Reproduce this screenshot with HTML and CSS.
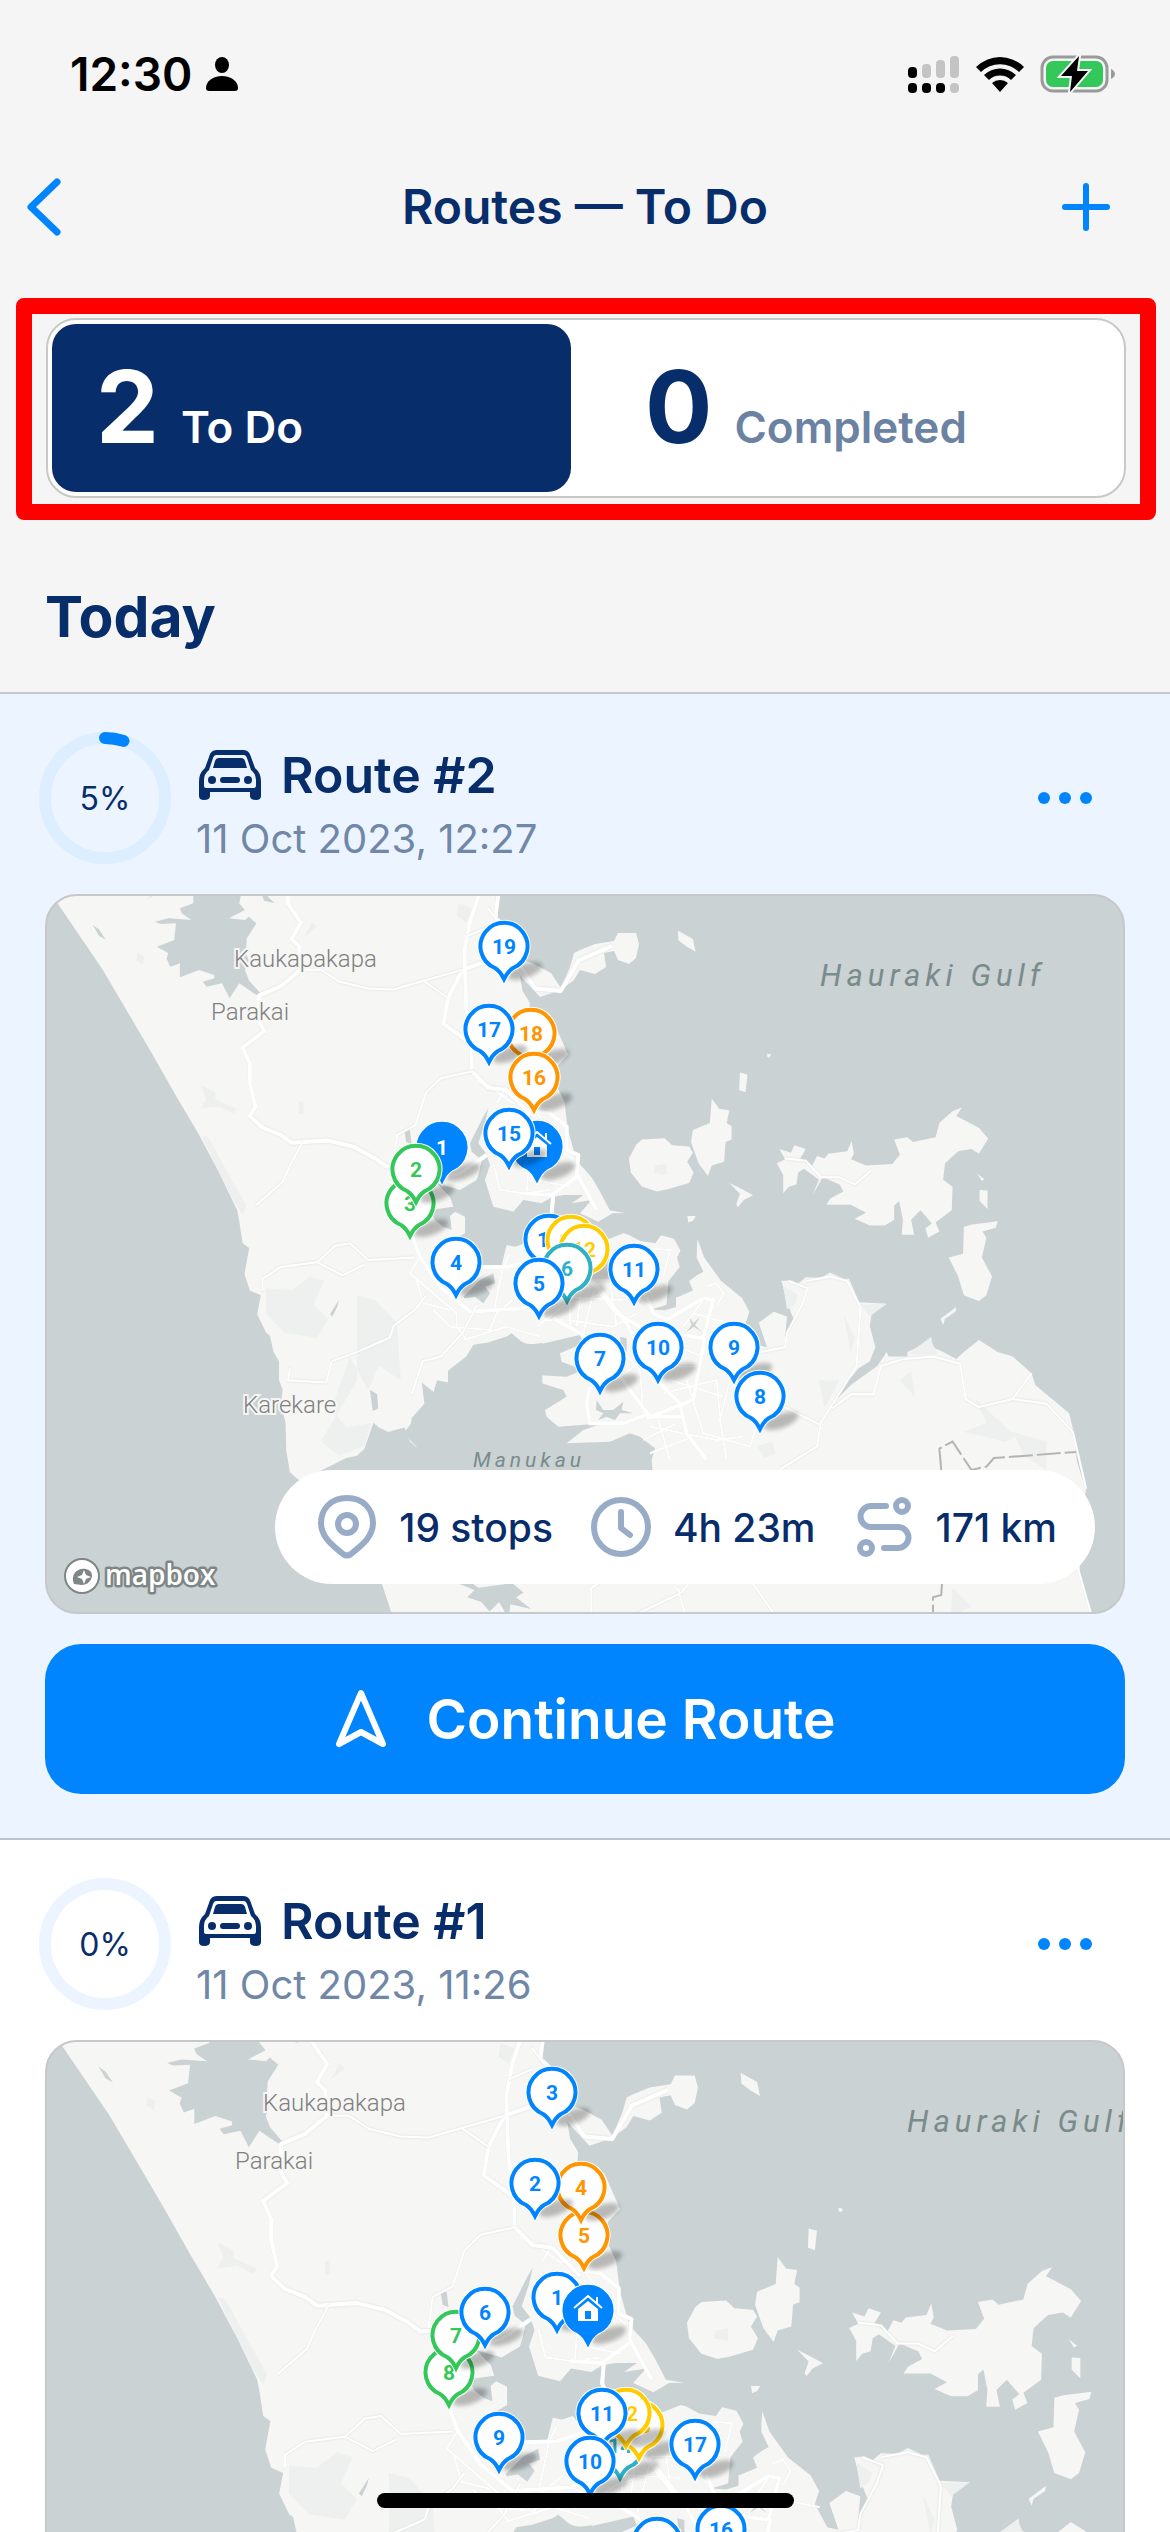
FILE: index.html
```html
<!DOCTYPE html>
<html lang="en">
<head>
<meta charset="utf-8">
<meta name="viewport" content="width=device-width, initial-scale=1">
<title>Routes — To Do</title>
<link rel="stylesheet" href="styles.css">
</head>
<body>
<svg class="defs" aria-hidden="true">
  <defs>
    <filter id="soft" x="-50%" y="-50%" width="200%" height="200%"><feGaussianBlur stdDeviation="2"/></filter>
    <g id="pin">
      <ellipse cx="21" cy="25" rx="18" ry="7" transform="rotate(-20 21 25)" class="pin-shadow" filter="url(#soft)"/>
      <path class="pin-halo" d="M-9 22A23.500 23.500 0 1 1 9 22Q4 25 0 33Q-4 25 -9 22Z"/>
      <path class="pin-body" d="M-9 22A23.500 23.500 0 1 1 9 22Q4 25 0 33Q-4 25 -9 22Z"/>
    </g>
    <g id="house">
      <path class="house-fill" d="M-10 -1L0 -9L10 -1V11H-10Z"/>
      <path class="house-roof" d="M-14 -2L0 -14L14 -2M9 -13V-7"/>
      <rect class="house-door" x="-3" y="1" width="6" height="8"/>
    </g>
    <symbol id="car" viewBox="0 0 62 50">
      <path fill="currentColor" fill-rule="evenodd" d="M18 0H44C50 0 51 4 52 7L56 18Q62 23 62 31V46Q62 50 57 50Q51 50 51 46V42H11V46Q11 50 5 50Q0 50 0 46V31Q0 23 6 18L10 7C11 4 12 0 18 0ZM17 5Q15 5 14 8L10 20Q5 24 5 30V36Q5 38 8 38H54Q57 38 57 36V30Q57 24 52 20L48 8Q47 5 45 5Z"/>
      <path fill="currentColor" d="M20 8H42Q45 8 46 11L48 18H14L16 11Q17 8 20 8Z"/>
      <circle cx="13" cy="30" r="4" fill="currentColor"/><circle cx="49" cy="30" r="4" fill="currentColor"/>
      <rect x="21" y="27" width="20" height="6" rx="3" fill="currentColor"/>
    </symbol>

    <!-- Auckland region: land, inlets, roads -->
    <g id="region">
      <g transform="translate(30 880) scale(.3635 .4719)">
        <path class="land" d="M30 -10L72 45L200 190L330 360L400 455L465 540L520 620L570 700L575 720L585 770L603 780L590 835L605 870L635 880L625 920L650 960L660 965L670 1000L685 1020V1060L695 1080L690 1110L703 1150L705 1210L715 1255L745 1275L800 1252L870 1225L900 1220L920 1205L945 1150L960 1160L985 1170L1030 1160L1045 1190L1065 1203L1045 1170L1050 1140L1085 1110L1078 1065L1110 1085L1120 1060L1150 1065L1150 1040L1200 1010L1220 985L1260 980L1320 965L1370 985L1440 978L1475 965L1500 975L1620 975L1640 706L1595 700L1568 660L1545 630L1510 600L1500 585L1480 530L1470 470L1445 430L1450 395L1480 370L1440 300L1372 290L1375 260L1355 235L1345 190L1310 140L1290 90L1280 60L1285 -10Z"/>
        <path class="shade" d="M470 435L510 450L510 465L568 485L560 495L520 480L468 485L485 465ZM470 540L490 545L595 690L585 710L560 680ZM650 865L720 870L770 840L810 850L780 900L820 930L790 970L700 960L650 920ZM900 880L950 890L1010 940L1020 1060L960 1030L930 1080L880 1010L830 1120L870 1160L940 1150L920 1200L850 1220L800 1190L900 1060ZM1180 50L1215 60L1200 90L1175 75ZM295 155L315 160L310 180L292 170ZM740 470h12v26h-12ZM775 90L790 98L755 120Z"/>
        <path class="inlet" d="M172 95L190 105L208 126L190 118ZM825 920L850 890L845 905L832 925ZM1030 530L1045 530L1050 560L1035 555ZM935 1080L955 1090L958 1120L943 1125Z"/>
      </g>
      <g transform="translate(0 690) scale(.3827 .3333)">
        <path class="inlet" d="M505 600V640L470 655L475 670L500 690L440 685L405 695L420 702L460 700L455 750L410 770L440 790L435 805L445 830L470 820L470 862L520 840L560 855V865L530 875L540 890L580 880L600 925L625 880L670 915L680 910L650 870L640 840L650 810L642 790L645 745L670 700L650 680L640 690L598 685L640 660L625 640L632 600ZM680 600L690 632L718 640L700 620L712 600ZM380 632L405 612L395 618Z"/>
      </g>
      <path class="land" d="M505 955L515 970L540 997L561 990L574 980L580 970L595 974L606 967L604 953L614 951L618 960L629 964L636 958L639 944L636 933L618 933L614 941L595 944L580 950L574 953L570 967L561 988L551 973L532 963Z"/>
      <g transform="translate(580 880) scale(.3763 .4719)">
        <path class="land" d="M-100 750L60 760L90 762L120 748L160 765L200 770L215 753L250 760L267 785L258 800L265 820L235 850L230 900L190 910L225 912L255 905V885L300 870L290 850L310 838L328 830L310 800L312 760L330 800L375 850L430 885L450 915L440 940L470 985L497 990L475 938L515 915L550 925L545 970L570 935L555 905L535 850L560 848L580 855L600 842L640 843L665 832L700 845L715 845L742 895L815 898L775 920L770 945L785 990L770 1020L740 1035L725 1050L700 1070L670 1110L720 1070L790 1030L815 1000L820 1010L870 1010V1000L915 985L933 968L937 990L965 1000L1000 1015L1020 1000L1060 975L1110 1000L1150 1010L1200 1045L1210 1070L1300 1130L1315 1180L1320 1230L1345 1295L1320 1340L1330 1480L1365 1580H-490L-532 1478H-100Z"/>
        <path class="inlet" d="M-320 1492L-290 1488L-270 1500L-180 1490L-150 1510L-170 1520L-130 1545L-185 1535L-190 1565L-215 1530L-240 1550L-262 1530L-300 1520L-280 1505Z"/>
        <path class="land" d="M150 560L165 550L225 547L245 562L290 565L300 578L285 597L302 620L290 642L235 655L205 660L165 650L135 620L130 590ZM350 463L370 485L397 488L390 515L403 522V550L387 555L383 597L350 605L340 627L315 600L295 555L300 530L345 515ZM425 408L445 412L440 450L423 445ZM397 642L430 655L460 668L435 678L420 693L415 688L425 665ZM285 712L308 712L300 722L288 726ZM260 107L300 125L307 152L285 142L262 128ZM497 368L508 370L504 376L498 375Z"/>
        <path class="land" d="M523 600L545 592L530 570L560 578L570 562L600 570L585 590L615 608L630 585L650 590L660 580L710 575L722 553L728 580L720 592L760 605L830 602L850 582L835 550L870 545L885 555L945 545L955 515L990 490L1015 482L1000 500L1060 525L1085 548L1060 580L1040 570L1005 575L970 600L965 635L990 650L988 700L945 725L955 745L925 758L918 738L935 728L905 700L880 720L888 752L855 752L858 720L848 680L835 690V720L810 732H770L730 718L760 705L720 688H655L665 675L700 660L690 645L645 630L618 668L635 635L595 612L580 620L575 645L555 650L540 664V625ZM1020 735L1042 730L1110 723L1105 737L1070 745L1080 758L1068 800L1095 840L1080 880L1060 892L1020 880L1005 840L980 800L1018 792ZM1062 657L1083 658V697L1062 680ZM1055 622L1075 634L1068 638ZM958 930L1000 905L998 915L970 930L965 943Z"/>
        <path class="shade" d="M745 900L815 898L770 925ZM870 1005L930 970L950 1005ZM200 605L230 600L230 625L195 620ZM540 860L580 880L570 900L550 910ZM700 920L730 970L720 1000ZM1050 1100L1160 1180L1130 1190L1020 1170L1080 1150ZM1150 1170L1240 1190L1240 1250L1180 1220ZM990 1500L1040 1540L985 1560ZM880 1040L890 1095L850 1060ZM470 1200L510 1190L520 1215L490 1225ZM635 1060L690 1060L650 1120Z"/>
      </g>
      <g transform="translate(350 1080) scale(.3333)">
        <path class="inlet" d="M260 310L330 330L380 300L388 275L395 240L365 215L360 190L400 110L415 85L405 130L385 190L408 220L420 255L405 300L430 380L490 395L520 360L575 370L605 352L640 345L700 345L665 370L725 360L690 400L745 425L788 400L1000 395L1000 470L935 465L900 480L820 460L770 480L700 440L620 470L540 510L525 490L495 500L470 495L455 555L400 560L310 480L345 460V410L315 395L300 408L305 450L280 440L255 420L240 390L310 380L300 350Z"/>
        <path class="inlet" d="M485 760L520 790L560 795L690 765L700 790L630 820L635 845L700 870L650 890L560 885L575 910L640 930L650 950L585 990L590 1010L625 1040L760 1030L700 1050L650 1090L780 1085L840 1060L870 1070L915 1105L905 1140L915 1260L250 1280L200 1100L160 1060L240 960L270 930L330 900L370 840L440 790Z"/>
        <path class="inlet" d="M740 960L760 990L790 990L820 965L815 990L850 1000L810 1000L795 1020L770 1010L745 1020L760 1000L738 990ZM1015 705L1030 730L1050 710L1035 735L1055 755L1032 740L1010 755L1025 735ZM810 770L830 775L830 815L815 805ZM340 650L370 620L390 600L430 580L435 610L405 620L420 640L400 670L375 650L345 655Z"/>
        <path class="minor" d="M200 600L220 670L300 690M210 530L180 580L250 640L320 700V740L350 780M250 690L300 740L420 750L440 700L500 650M430 700L460 560L480 520M340 780L470 740L570 770M520 685L590 720L640 720M600 600L800 600L900 680M650 720L790 740L860 700M660 600V740M700 580L680 740M740 600L700 760M630 650L820 660M560 740L640 680L760 640M780 600L800 740M900 500L920 600L880 640M830 500L960 510L940 590M760 760L870 870L880 1000M820 800L740 880M800 900L900 820M900 1040L1100 1080L1180 1070M920 1000L960 1140M940 940L1100 900L1110 1010M960 900L1120 950M980 800L1060 830M1030 700L1100 720L1200 740M1060 660L1000 740M1010 900L1060 1060L1200 1100L1230 1010M990 860L1040 860M1140 900L1110 1020L1130 1140M880 1080L980 1030M1030 1070L900 1120M420 20L490 70L530 60L600 150M500 90L570 160L670 240M440 70L470 20M430 250L450 330L520 340L600 330M540 220L530 340M560 300L660 320M1070 620L1100 610L1120 640L1100 680"/>
        <path class="major" d="M180 450L210 530L270 620L360 695L520 685L580 650L700 590L720 600L800 700L870 740L960 760L1060 775L1090 660L1060 655L950 720L910 700L890 650M390 562L480 560L600 520M610 340L605 400L640 500L760 640L830 730L920 900L990 970L1010 1060L1070 1140M610 715L700 765L780 850L900 1010L1000 1010M1065 770L1030 960L890 1015M720 920L710 970L720 1030L820 1030L900 1000M460 20L530 90L600 100L650 140L650 210L685 225L680 280L740 390M520 340L605 345L680 290M230 310L330 280L410 225M380 0L440 30"/>
      </g>
      <g transform="translate(30 880) scale(.3635 .4719)">
        <path class="major" d="M708 20L710 50L745 90L720 125L740 140L745 190L690 225L630 245V300L645 320L585 355L605 390V430L620 480L605 500L640 525L690 540L720 557L820 552L890 565L950 590L980 607L1020 605M1240 20L1210 90L1195 150L1200 270L1215 340V405L1260 440L1310 445L1380 500M1190 190L1150 250L1138 305L1210 345M1190 190L1340 150M1290 20L1280 80L1320 110M1340 170L1390 230L1460 235L1510 170L1600 140"/>
        <path class="minor" d="M750 555L715 605L695 640L620 690M755 190L800 190L850 215L930 230L1000 232L1190 190M1080 212L1150 250M640 870V845L690 820L790 810L840 775L880 770L930 805L1060 800M790 810L860 838L920 815M990 970L1000 945L1060 910L1090 880M990 970L900 1000L830 1020L815 1065L710 1060L715 1035M1000 600L1010 540L1060 520L1090 450L1130 420L1220 405M1200 120L1260 100M1260 60L1300 100L1240 130M1050 1090L1080 1020L1130 1010L1190 960L1230 900"/>
      </g>
      <g transform="translate(580 880) scale(.3763 .4719)">
        <path class="minor" d="M555 850L605 865L590 900L550 960L545 990L480 1000M600 850L665 840L710 850L745 905L735 1030L640 1150L630 1200L530 1250M500 1100L640 1155M670 1120L720 1090L780 1090L800 1030L860 1015L940 1010L1010 1025L1025 1100L1060 1117L1150 1100L1200 1045M1150 1100L1240 1110L1310 1170L1345 1290M1320 1450L1360 1560M545 590L600 595L640 630L690 630L730 645L775 615M30 1560V1500L60 1485M140 1560L270 1510L300 1480M450 1480L520 1560M260 1500L280 1560"/>
        <path class="border" d="M960 1250L955 1205L990 1190L1040 1250L1080 1243L1100 1225L1318 1212M962 1490L960 1515L938 1520V1560"/>
      </g>
    </g>
  </defs>
</svg>

<div class="app">
  <div class="status">
    <div class="status-left">
      <span class="clock">12:30</span>
      <svg width="32" height="34" viewBox="0 0 32 34"><ellipse cx="16" cy="8" rx="7" ry="8"/><path d="M0 31C0 24 7 19 16 19S32 24 32 31Q32 34 29 34H3Q0 34 0 31Z"/></svg>
    </div>
    <div class="status-right">
      <svg width="52" height="38" viewBox="0 0 52 38"><g><rect y="12" width="9" height="11" rx="4"/><rect y="28" width="9" height="10" rx="4"/><rect x="14" y="28" width="9" height="10" rx="4"/><rect x="28" y="28" width="9" height="10" rx="4"/></g><g fill="#c4c4c4"><rect x="14" y="9" width="9" height="14" rx="4"/><rect x="28" y="5" width="9" height="18" rx="4"/><rect x="42" y="1" width="9" height="22" rx="4"/><rect x="42" y="28" width="9" height="10" rx="4"/></g></svg>
      <svg width="48" height="36" viewBox="0 0 48 36"><path d="M0 11A34 34 0 0 1 48 11L43 16A27 27 0 0 0 5 16ZM8 19A23 23 0 0 1 40 19L35 24A16 16 0 0 0 13 24ZM16 27A12 12 0 0 1 32 27L24 36Z"/></svg>
      <svg width="76" height="38" viewBox="0 0 76 38"><rect x="2" y="2" width="65" height="34" rx="11" fill="none" stroke="#9a9a9a" stroke-width="3"/><path d="M71 14Q75 16 75 19T71 24Z" fill="#9a9a9a"/><rect x="6" y="6" width="57" height="26" rx="7" fill="#34c759"/><path d="M39 1L21 21H32L30 37L48 16H37Z" stroke="#f5f5f5" stroke-width="4" paint-order="stroke"/></svg>
    </div>
  </div>

  <header class="nav">
    <button class="nav-btn" aria-label="Back"><svg width="34" height="58" viewBox="0 0 34 58"><path d="M30 4L4 29L30 54"/></svg></button>
    <h1>Routes — To Do</h1>
    <button class="nav-btn nav-add" aria-label="Add route"><svg width="50" height="50" viewBox="0 0 50 50"><path d="M25 4V46M4 25H46"/></svg></button>
  </header>

  <div class="highlight">
    <div class="tabs" role="tablist">
      <button class="tab active" role="tab" aria-selected="true"><span class="count">2</span><span class="tab-label">To Do</span></button>
      <button class="tab" role="tab" aria-selected="false"><span class="count">0</span><span class="tab-label">Completed</span></button>
    </div>
  </div>

  <h2>Today</h2>

  <main class="list">
    <article class="card current">
      <div class="card-head">
        <div class="ring"><svg viewBox="0 0 132 132"><circle class="track" cx="66" cy="66" r="60"/><circle class="bar" cx="66" cy="66" r="60" pathLength="100" stroke-dasharray="5 95" transform="rotate(-90 66 66)"/></svg><span>5%</span></div>
        <div class="info">
          <h3><svg class="car"><use href="#car"/></svg>Route #2</h3>
          <p>11 Oct 2023, 12:27</p>
        </div>
        <button class="more" aria-label="More options"><i></i><i></i><i></i></button>
      </div>
      <div class="map">
        <svg class="map-art" viewBox="47 896 1076 716">
          <use href="#region"/>
          <g class="place"><text x="234" y="967">Kaukapakapa</text><text x="211" y="1020">Parakai</text><text x="243" y="1413">Karekare</text></g>
          <text class="sea" x="820" y="986">Hauraki Gulf</text><text class="sea small" x="473" y="1467">Manukau</text>
          <g class="pin blue" transform="translate(504 946)"><use href="#pin"/><text y="8">19</text></g>
          <g class="pin orange" transform="translate(531 1033)"><use href="#pin"/><text y="8">18</text></g>
          <g class="pin blue" transform="translate(489 1029)"><use href="#pin"/><text y="8">17</text></g>
          <g class="pin orange" transform="translate(534 1077)"><use href="#pin"/><text y="8">16</text></g>
          <g class="pin blue solid" transform="translate(537 1146)"><use href="#pin"/><use href="#house"/></g>
          <g class="pin blue" transform="translate(509 1133)"><use href="#pin"/><text y="8">15</text></g>
          <g class="pin blue solid" transform="translate(442 1147)"><use href="#pin"/><text y="8">1</text></g>
          <g class="pin green" transform="translate(410 1203)"><use href="#pin"/><text y="8">3</text></g>
          <g class="pin green" transform="translate(416 1169)"><use href="#pin"/><text y="8">2</text></g>
          <g class="pin blue" transform="translate(456 1262)"><use href="#pin"/><text y="8">4</text></g>
          <g class="pin blue" transform="translate(549 1239)"><use href="#pin"/><text y="8">14</text></g>
          <g class="pin yellow" transform="translate(571 1240)"><use href="#pin"/><text y="8">13</text></g>
          <g class="pin yellow" transform="translate(584 1249)"><use href="#pin"/><text y="8">12</text></g>
          <g class="pin teal" transform="translate(567 1268)"><use href="#pin"/><text y="8">6</text></g>
          <g class="pin blue" transform="translate(539 1283)"><use href="#pin"/><text y="8">5</text></g>
          <g class="pin blue" transform="translate(634 1269)"><use href="#pin"/><text y="8">11</text></g>
          <g class="pin blue" transform="translate(600 1358)"><use href="#pin"/><text y="8">7</text></g>
          <g class="pin blue" transform="translate(658 1347)"><use href="#pin"/><text y="8">10</text></g>
          <g class="pin blue" transform="translate(734 1347)"><use href="#pin"/><text y="8">9</text></g>
          <g class="pin blue" transform="translate(760 1396)"><use href="#pin"/><text y="8">8</text></g>
          <g class="logo"><circle cx="82" cy="1576" r="17"/><path d="M74 1584C70 1574 78 1567 86 1569S93 1578 89 1582 80 1585 74 1584Z"/><path class="spark" d="M84 1570L86 1575L91 1577L86 1579L84 1584L82 1579L77 1577L82 1575Z"/><text x="105" y="1585">mapbox</text></g>
        </svg>
        <div class="stats">
          <span class="stat"><svg viewBox="0 0 72 72"><path d="M36 7C20 7 10 18 10 32C10 47 24 56 32 63Q36 66 40 63C48 56 62 47 62 32C62 18 52 7 36 7Z"/><circle cx="36" cy="33" r="9"/></svg>19 stops</span>
          <span class="stat"><svg viewBox="0 0 72 72"><circle cx="36" cy="36" r="27"/><path d="M36 21V37L45 44"/></svg>4h 23m</span>
          <span class="stat"><svg viewBox="0 0 72 72"><circle cx="54" cy="15" r="6"/><circle cx="18" cy="57" r="6"/><path d="M38 15H23A10 10 0 0 0 23 36H50A10 10 0 0 1 50 57H36"/></svg>171 km</span>
        </div>
      </div>
      <button class="primary"><svg width="52" height="60" viewBox="0 0 52 60"><path d="M26 4L48 55L26 43L4 55Z"/></svg>Continue Route</button>
    </article>

    <article class="card">
      <div class="card-head">
        <div class="ring"><svg viewBox="0 0 132 132"><circle class="track" cx="66" cy="66" r="60"/></svg><span>0%</span></div>
        <div class="info">
          <h3><svg class="car"><use href="#car"/></svg>Route #1</h3>
          <p>11 Oct 2023, 11:26</p>
        </div>
        <button class="more" aria-label="More options"><i></i><i></i><i></i></button>
      </div>
      <div class="map">
        <svg class="map-art" viewBox="47 2042 1076 716">
          <use href="#region" transform="translate(-3 1052) scale(1.097)"/>
          <g class="place"><text x="263" y="2111">Kaukapakapa</text><text x="235" y="2169">Parakai</text></g>
          <text class="sea" x="907" y="2132">Hauraki Gulf</text>
          <g class="pin blue" transform="translate(552 2092)"><use href="#pin"/><text y="8">3</text></g>
          <g class="pin orange" transform="translate(584 2235)"><use href="#pin"/><text y="8">5</text></g>
          <g class="pin orange" transform="translate(581 2187)"><use href="#pin"/><text y="8">4</text></g>
          <g class="pin blue" transform="translate(535 2183)"><use href="#pin"/><text y="8">2</text></g>
          <g class="pin blue" transform="translate(557 2297)"><use href="#pin"/><text y="8">1</text></g>
          <g class="pin blue solid" transform="translate(588 2310)"><use href="#pin"/><use href="#house"/></g>
          <g class="pin green" transform="translate(449 2372)"><use href="#pin"/><text y="8">8</text></g>
          <g class="pin green" transform="translate(456 2335)"><use href="#pin"/><text y="8">7</text></g>
          <g class="pin blue" transform="translate(485 2312)"><use href="#pin"/><text y="8">6</text></g>
          <g class="pin blue" transform="translate(499 2437)"><use href="#pin"/><text y="8">9</text></g>
          <g class="pin teal" transform="translate(620 2445)"><use href="#pin"/><text y="8">14</text></g>
          <g class="pin yellow" transform="translate(639 2425)"><use href="#pin"/><text y="8">13</text></g>
          <g class="pin yellow" transform="translate(626 2413)"><use href="#pin"/><text y="8">12</text></g>
          <g class="pin blue" transform="translate(602 2413)"><use href="#pin"/><text y="8">11</text></g>
          <g class="pin blue" transform="translate(590 2461)"><use href="#pin"/><text y="8">10</text></g>
          <g class="pin blue" transform="translate(695 2444)"><use href="#pin"/><text y="8">17</text></g>
          <g class="pin blue" transform="translate(721 2529)"><use href="#pin"/><text y="8">16</text></g>
          <g class="pin blue" transform="translate(657 2542)"><use href="#pin"/></g>
        </svg>
      </div>
    </article>
  </main>
  <div class="home-bar"></div>
</div>
</body>
</html>
```
FILE: styles.css
```css
* { box-sizing: border-box; }
body { margin: 0; background: #f5f5f5; color: #082d6b; font-family: Inter, "Liberation Sans", sans-serif; }
button { font: inherit; color: inherit; border: 0; padding: 0; background: none; }
h1, h2, h3, p { margin: 0; }
.defs { position: absolute; width: 0; height: 0; }
.app { height: 100vh; display: flex; flex-direction: column; overflow: hidden; position: relative; }

.status { display: flex; justify-content: space-between; align-items: center; height: 148px; padding: 0 54px 0 70px; color: #000; flex: none; }
.status-left { display: flex; align-items: center; gap: 14px; }
.status-right { display: flex; align-items: center; gap: 16px; }
.clock { font-size: 46px; font-weight: 600; line-height: 56px; }

.nav { display: flex; align-items: center; justify-content: space-between; height: 118px; padding: 0 59px 0 27px; flex: none; }
.nav-btn { width: 80px; height: 80px; display: flex; align-items: center; color: #0085ff; }
.nav-add { justify-content: flex-end; }
.nav-btn svg { flex: none; fill: none; stroke: currentColor; stroke-width: 7; stroke-linecap: round; stroke-linejoin: round; }
.nav-add svg { stroke-width: 6; }
h1 { font-size: 48px; line-height: 60px; font-weight: 600; padding-left: 32px; }

.highlight { margin: 32px 14px 0 16px; padding: 4px 14px 6px; border: 16px solid #f00; border-radius: 8px; flex: none; }
.tabs { display: grid; grid-template-columns: 1fr 1fr; gap: 30px; padding: 4px; height: 180px; background: #fff; border: 2px solid #c8c8ca; border-radius: 30px; }
.tab { display: flex; align-items: baseline; gap: 22px; padding: 22px 44px 0; border-radius: 24px; text-align: left; }
.count { font-size: 100px; line-height: 122px; font-weight: 700; }
.tab-label { font-size: 44px; line-height: 56px; font-weight: 600; color: #6b82a3; }
.active { background: #082d6b; color: #fff; }
.active .tab-label { color: #fff; }

h2 { font-size: 57px; line-height: 72px; font-weight: 700; padding: 61px 45px 39px; flex: none; }

.list { flex: 1; min-height: 0; overflow-y: auto; scrollbar-width: none; border-top: 2px solid #c8c8ca; background: #fff; }
.card { padding: 38px 45px 44px; }
.current { background: #ecf5ff; border-bottom: 2px solid #bbc4d2; }
.card-head { display: flex; align-items: center; height: 132px; margin-left: -6px; margin-bottom: 30px; }
.ring { width: 132px; height: 132px; display: grid; place-items: center; flex: none; font-size: 32px; }
.ring > * { grid-area: 1 / 1; }
.ring svg { width: 132px; height: 132px; fill: none; stroke-width: 12; }
.track { stroke: #ecf5ff; }
.current .track { stroke: #dceeff; }
.bar { stroke: #0085ff; stroke-linecap: round; }
.info { flex: 1; padding: 14px 0 0 25px; }
.car { width: 62px; height: 50px; flex: none; }
h3 { display: flex; align-items: center; gap: 20px; padding-left: 3px; font-size: 50px; line-height: 64px; font-weight: 600; }
.info p { font-size: 40px; line-height: 56px; color: #7087a7; padding-top: 4px; }
.more { display: flex; gap: 9px; width: 100px; height: 80px; align-items: center; justify-content: center; margin-right: 10px; }
.more i { width: 12px; height: 12px; border-radius: 50%; background: #0085ff; }

.map { position: relative; overflow: hidden; border: 2px solid #c6c8ca; border-radius: 32px; background: #cad2d3; }
.map-art { display: block; width: 100%; height: auto; }
.land { fill: #f6f6f4; }
.inlet { fill: #cad2d3; }
.shade { fill: #eef0ef; }
.major, .minor { fill: none; stroke: #fff; stroke-width: 4; stroke-linejoin: round; vector-effect: non-scaling-stroke; filter: drop-shadow(0 0 2px #d9dedd); }
.minor { stroke-width: 2; }
.border { fill: none; stroke: #b4b4b4; stroke-width: 2; stroke-dasharray: 24 4; vector-effect: non-scaling-stroke; }
.place { font: 300 24px Roboto, sans-serif; fill: #808080; stroke: #f6f6f4; stroke-width: 4; paint-order: stroke; }
.sea { font: italic 400 31px Roboto, sans-serif; letter-spacing: 5px; fill: #7a8b8b; }
.small { font-size: 21px; letter-spacing: 4px; }
.pin text { font: 700 21px Roboto, sans-serif; fill: currentColor; text-anchor: middle; }
.pin-halo { fill: #fff; stroke: #fff; stroke-width: 6; }
.pin-body { fill: var(--pin-fill, #fff); stroke: currentColor; stroke-width: 4; }
.pin-shadow { fill: #000; opacity: .25; }
.blue { color: #0085ff; }
.orange { color: #ff9500; }
.green { color: #34c759; }
.yellow { color: #ffcc00; }
.teal { color: #30b0c7; }
.solid { --pin-fill: #0085ff; }
.solid text { fill: #fff; }
.house-fill { fill: #fff; }
.house-roof { fill: none; stroke: #fff; stroke-width: 2; }
.house-door { fill: #0085ff; }
.logo { fill: #fff; stroke: #7f8686; stroke-width: 2; }
.logo path { fill: #7f8686; stroke: none; }
.logo .spark { fill: #fff; }
.logo text { font: 600 28px "Open Sans", sans-serif; stroke-width: 5; paint-order: stroke; stroke-linejoin: round; }

.stats { position: absolute; right: 28px; bottom: 28px; display: flex; align-items: center; gap: 32px; height: 114px; padding: 0 38px 0 36px; border-radius: 57px; background: #fff; font-size: 39px; font-weight: 500; }
.stat { display: flex; align-items: center; gap: 16px; white-space: nowrap; }
.stat svg { width: 72px; height: 72px; fill: none; stroke: #98acc8; stroke-width: 6; stroke-linecap: round; stroke-linejoin: round; }

.primary { display: flex; align-items: center; justify-content: center; gap: 40px; width: 100%; height: 150px; margin-top: 30px; border-radius: 36px; background: #0085ff; color: #fff; font-size: 55px; font-weight: 600; }
.primary svg { fill: none; stroke: #fff; stroke-width: 6; stroke-linejoin: round; }
.home-bar { position: absolute; bottom: 24px; left: 50%; width: 417px; height: 15px; margin-left: -208px; border-radius: 8px; background: #000; }
```
